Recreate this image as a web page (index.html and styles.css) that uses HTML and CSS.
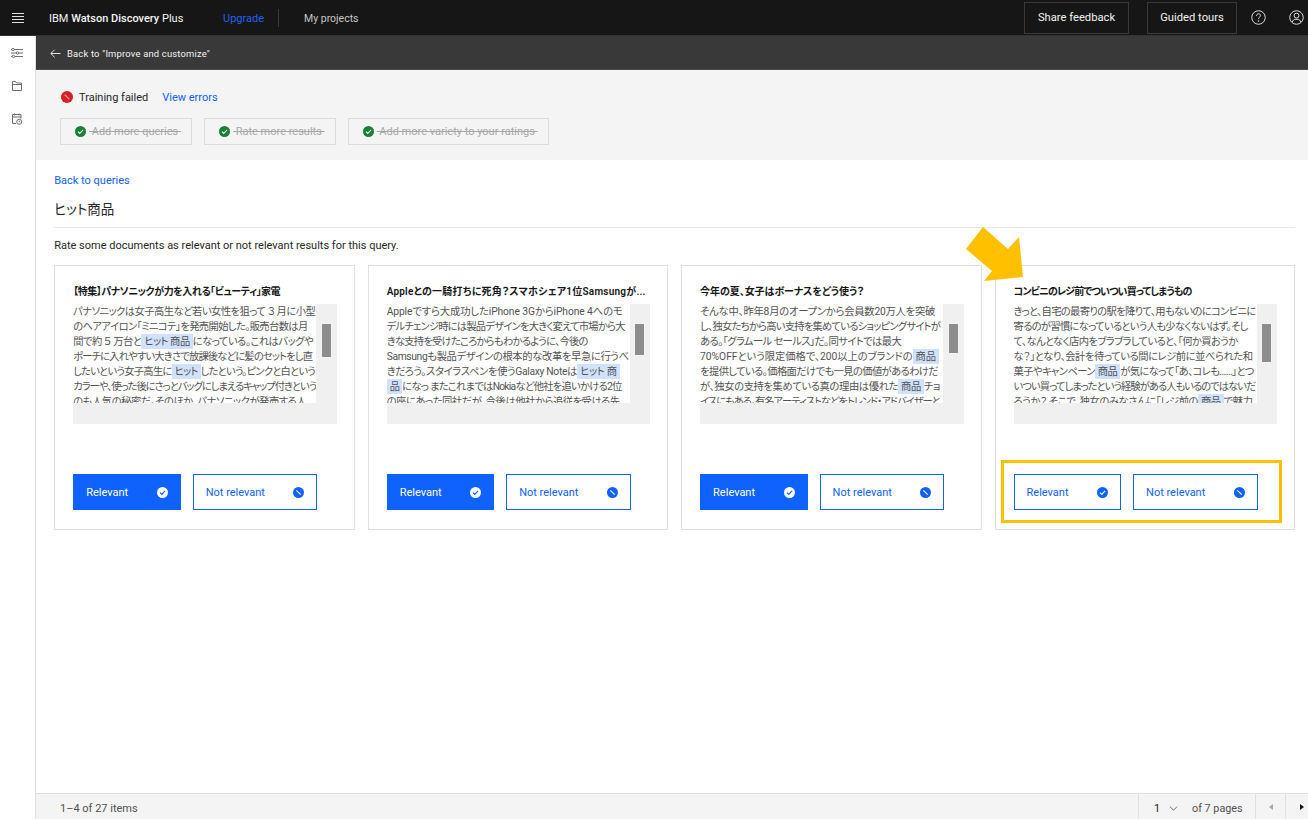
FILE: index.html
```html
<!DOCTYPE html>
<html lang="ja">
<head>
<meta charset="utf-8">
<title>IBM Watson Discovery Plus</title>
<link rel="stylesheet" href="styles.css">
</head>
<body>
<svg class="sprite" width="0" height="0" aria-hidden="true">
  <symbol id="i-check" viewBox="0 0 16 16"><circle cx="8" cy="8" r="8" fill="currentColor"/><path d="M4.4 8.2 7 10.8l4.7-5.2" fill="none" stroke="var(--mark)" stroke-width="1.6"/></symbol>
  <symbol id="i-block" viewBox="0 0 16 16"><circle cx="8" cy="8" r="8" fill="currentColor"/><path d="M4.8 4.8l6.4 6.4" fill="none" stroke="var(--mark)" stroke-width="1.6"/></symbol>
</svg>
<header class="topbar">
  <svg class="menu-icon" viewBox="0 0 12 10"><path d="M0 .5h12M0 3.5h12M0 6.5h12M0 9.5h12" stroke="#e0e0e0" fill="none"/></svg>
  <div class="brand">IBM <b>Watson Discovery</b> Plus</div>
  <a class="upgrade">Upgrade</a>
  <span class="top-divider"></span>
  <a class="projects">My projects</a>
  <div class="top-actions">
    <button class="top-btn top-btn-feedback">Share feedback</button>
    <button class="top-btn top-btn-tours">Guided tours</button>
    <svg class="top-icon top-icon-help" viewBox="0 0 16 16"><circle cx="8" cy="8" r="7.2" fill="none" stroke="#e8e8e8"/><path d="M5.9 6.2c0-1.3 1-2.1 2.2-2.1 1.2 0 2.1.8 2.1 1.9 0 1.6-2.2 1.6-2.2 3.4" fill="none" stroke="#e8e8e8"/><circle cx="8" cy="11.6" r=".8" fill="#e8e8e8"/></svg>
    <svg class="top-icon top-icon-user" viewBox="0 0 16 16"><circle cx="8" cy="8" r="7.2" fill="none" stroke="#e8e8e8"/><circle cx="8" cy="6" r="2.6" fill="none" stroke="#e8e8e8"/><path d="M3.6 13c.3-2 1.6-3 3-3h2.8c1.4 0 2.7 1 3 3" fill="none" stroke="#e8e8e8"/></svg>
  </div>
</header>
<div class="shell">
  <nav class="rail">
    <svg class="rail-icon" viewBox="0 0 12 12"><g fill="none" stroke="#6f6f6f"><path d="M3 2.5h9M0 2.5h1M8 6h4M0 6h5M4 9.5h8M0 9.5h1"/><circle cx="2" cy="2.5" r="1.2"/><circle cx="6.5" cy="6" r="1.2"/><circle cx="2.5" cy="9.5" r="1.2"/></g></svg>
    <svg class="rail-icon" viewBox="0 0 12 12"><path d="M1.5 1.5h3l1 1.500h5v7.500h-9zM1.500 4.500h9" fill="none" stroke="#6f6f6f"/></svg>
    <svg class="rail-icon" viewBox="0 0 12 12"><g fill="none" stroke="#6f6f6f"><path d="M5 10.500H1.500v-9h8.500v4M1.500 4h8.500M3.500 .5v2M8 .5v2"/><circle cx="8.200" cy="8.800" r="2.500"/><path d="M8.200 7.600v1.300h1"/></g></svg>
  </nav>
  <div class="main">
    <div class="subbar">
      <svg class="back-icon" viewBox="0 0 12 10"><path d="M11.500 5H1M5 .8 .8 5 5 9.200" fill="none" stroke="#f4f4f4"/></svg>
      <span>Back to "Improve and customize"</span>
    </div>
    <section class="status">
      <div class="status-row">
        <svg class="status-icon"><use href="#i-block"/></svg>
        <span class="status-text">Training failed</span>
        <a class="link status-link">View errors</a>
      </div>
      <div class="chips">
        <div class="chip"><svg class="chip-icon"><use href="#i-check"/></svg><s>&nbsp;Add more queries&nbsp;</s></div>
        <div class="chip"><svg class="chip-icon"><use href="#i-check"/></svg><s>&nbsp;Rate more results&nbsp;</s></div>
        <div class="chip"><svg class="chip-icon"><use href="#i-check"/></svg><s>&nbsp;Add more variety to your ratings&nbsp;</s></div>
      </div>
    </section>
    <section class="content">
      <a class="link back-link">Back to queries</a>
      <h1 class="query">ヒット商品</h1>
      <p class="hint">Rate some documents as relevant or not relevant results for this query.</p>
      <div class="cards">
        <article class="card">
          <h2 class="card-title"><span class="line" data-w="207">【特集】パナソニックが力を入れる「ビューティ」家電</span></h2>
          <div class="doc">
            <div class="doc-text">
              <span class="line" data-w="242">パナソニックは女子高生など若い女性を狙って ３ 月に小型</span>
              <span class="line" data-w="234">のヘアアイロン「ミニコテ」を発売開始した。販売台数は月</span>
              <span class="line" data-w="240">間で約 ５ 万台と<mark>ヒット 商品</mark>になっている。これはバッグや</span>
              <span class="line" data-w="239">ポーチに入れやすい大きさで放課後などに髪のセットをし直</span>
              <span class="line" data-w="242">したいという女子高生に<mark>ヒット</mark>したという。ピンクと白という</span>
              <span class="line" data-w="243">カラーや、使った後にさっとバッグにしまえるキャップ付きという</span>
              <span class="line" data-w="233">のも人気の秘密だ。そのほか、パナソニックが発売する人</span>
            </div>
            <div class="track"><div class="thumb thumb-a"></div></div>
          </div>
          <div class="actions">
            <button class="btn btn-on">Relevant<svg class="btn-icon"><use href="#i-check"/></svg></button>
            <button class="btn btn-wide">Not relevant<svg class="btn-icon"><use href="#i-block"/></svg></button>
          </div>
        </article>
        <article class="card">
          <h2 class="card-title"><span class="line" data-w="259">Appleとの一騎打ちに死角？スマホシェア1位Samsungが...</span></h2>
          <div class="doc">
            <div class="doc-text">
              <span class="line" data-w="236">Appleですら大成功したiPhone 3GからiPhone 4へのモ</span>
              <span class="line" data-w="238">デルチェンジ時には製品デザインを大きく変えて市場から大</span>
              <span class="line" data-w="201">きな支持を受けたころからもわかるように、今後の</span>
              <span class="line" data-w="242">Samsungも製品デザインの根本的な改革を早急に行うべ</span>
              <span class="line" data-w="233">きだろう。スタイラスペンを使うGalaxy Noteは<mark>ヒット 商</mark></span>
              <span class="line" data-w="235"><mark>品</mark>になっ またこれまではNokiaなど他社を追いかける2位</span>
              <span class="line" data-w="233">の座にあった同社だが、今後は他社から追従を受ける先</span>
            </div>
            <div class="track"><div class="thumb thumb-b"></div></div>
          </div>
          <div class="actions">
            <button class="btn btn-on">Relevant<svg class="btn-icon"><use href="#i-check"/></svg></button>
            <button class="btn btn-wide">Not relevant<svg class="btn-icon"><use href="#i-block"/></svg></button>
          </div>
        </article>
        <article class="card">
          <h2 class="card-title"><span class="line" data-w="164">今年の夏、女子はボーナスをどう使う？</span></h2>
          <div class="doc">
            <div class="doc-text">
              <span class="line" data-w="235">そんな中、昨年8月のオープンから会員数20万人を突破</span>
              <span class="line" data-w="240">し、独女たちから高い支持を集めているショッピングサイトが</span>
              <span class="line" data-w="201">ある。「グラムール セールス」だ。同サイトでは最大</span>
              <span class="line" data-w="239">70%OFFという限定価格で、200以上のブランドの<mark>商品</mark></span>
              <span class="line" data-w="238">を提供している。価格面だけでも一見の価値があるわけだ</span>
              <span class="line" data-w="240">が、独女の支持を集めている真の理由は優れた<mark>商品</mark>チョ</span>
              <span class="line" data-w="239">イスにもある。有名アーティストなどをトレンド・アドバイザーと</span>
            </div>
            <div class="track"><div class="thumb thumb-c"></div></div>
          </div>
          <div class="actions">
            <button class="btn btn-on">Relevant<svg class="btn-icon"><use href="#i-check"/></svg></button>
            <button class="btn btn-wide">Not relevant<svg class="btn-icon"><use href="#i-block"/></svg></button>
          </div>
        </article>
        <article class="card">
          <h2 class="card-title"><span class="line" data-w="178">コンビニのレジ前でついつい買ってしまうもの</span></h2>
          <div class="doc">
            <div class="doc-text">
              <span class="line" data-w="242">きっと、自宅の最寄りの駅を降りて、用もないのにコンビニに</span>
              <span class="line" data-w="234">寄るのが習慣になっているという人も少なくないはず。そし</span>
              <span class="line" data-w="224">て、なんとなく店内をブラブラしていると、「何か買おうか</span>
              <span class="line" data-w="239">な？」となり、会計を待っている間にレジ前に並べられた和</span>
              <span class="line" data-w="240">菓子やキャンペーン<mark>商品</mark>が気になって「あ、コレも……」とつ</span>
              <span class="line" data-w="242">いつい買ってしまったという経験がある人もいるのではないだ</span>
              <span class="line" data-w="239">ろうか？ そこで、独女のみなさんに「レジ前の<mark>商品</mark>で魅力</span>
            </div>
            <div class="track"><div class="thumb thumb-d"></div></div>
          </div>
          <div class="actions">
            <button class="btn">Relevant<svg class="btn-icon"><use href="#i-check"/></svg></button>
            <button class="btn btn-wide">Not relevant<svg class="btn-icon"><use href="#i-block"/></svg></button>
          </div>
          <div class="callout-box"></div>
        </article>
      </div>
      <svg class="callout-arrow" viewBox="0 0 60 56"><polygon points="0,22 17,0 42,22 53,10 57,50 18,54 26,44" fill="#ffc000"/></svg>
    </section>
    <footer class="pager">
      <span class="pager-count">1–4 of 27 items</span>
      <div class="pager-pages">
        <span class="pager-num">1</span>
        <svg class="pager-chev" viewBox="0 0 10 6"><path d="M.7.7 5 5 9.300.7" fill="none" stroke="#525252"/></svg>
        <span class="pager-of">of 7 pages</span>
      </div>
      <div class="pager-nav"><span class="tri tri-left"></span></div>
      <div class="pager-nav pager-nav-last"><span class="tri tri-right"></span></div>
    </footer>
  </div>
</div>
<script src="fit.js"></script>
</body>
</html>
```

FILE: styles.css
```css
* { box-sizing: border-box; }
html, body { margin: 0; height: 100%; overflow: hidden; }
body {
  font-family: Roboto, "Noto Sans CJK JP", sans-serif;
  font-size: 11px;
  color: #161616;
  background: #fff;
  display: flex;
  flex-direction: column;
}
.sprite { position: absolute; }

.topbar {
  height: 36px;
  flex: none;
  display: flex;
  align-items: center;
  background: #161616;
  border-bottom: 1px solid #333;
  padding-left: 12px;
}
.menu-icon { width: 12px; height: 10px; margin-right: 25px; }
.brand { color: #f4f4f4; font-size: 11px; width: 174px; padding-top: 1px; }
.brand b { font-weight: 500; }
.upgrade { color: #1f62f0; font-size: 11px; width: 55px; padding-top: 1px; }
.top-divider { width: 1px; height: 18px; background: #393939; }
.projects { color: #c6c6c6; font-size: 10.500px; margin-left: 25px; padding-top: 1px; }
.top-actions { margin-left: auto; display: flex; align-items: center; height: 100%; }
.top-btn {
  height: 32px;
  border: 1px solid #393939;
  background: #161616;
  color: #f4f4f4;
  font: 11.200px Roboto, sans-serif;
  padding: 0;
}
.top-btn-feedback { width: 105px; margin-right: 18px; }
.top-btn-tours { width: 90px; }
.top-icon { width: 15px; height: 15px; }
.top-icon-help { margin-left: 14px; }
.top-icon-user { margin-left: 23px; margin-right: 4px; }

.shell { flex: 1; display: flex; min-height: 0; }
.rail {
  width: 36px;
  flex: none;
  background: #fff;
  border-right: 1px solid #e0e0e0;
  display: flex;
  flex-direction: column;
  align-items: center;
  gap: 21px;
  padding-top: 11px;
}
.rail-icon { width: 12px; height: 12px; margin-right: 1px; }
.main { flex: 1; display: flex; flex-direction: column; min-width: 0; }

.subbar {
  height: 34px;
  flex: none;
  display: flex;
  align-items: center;
  gap: 6px;
  padding: 1px 0 0 14px;
  background: #393939;
  border-bottom: 1px solid #4c4c4c;
  color: #f4f4f4;
  font-size: 9.400px;
  letter-spacing: .2px;
}
.back-icon { width: 11px; height: 9px; }

.status { flex: none; height: 90px; background: #f4f4f4; padding: 19px 24px 0; }
.status-row { display: flex; align-items: center; height: 16px; }
.status-icon { width: 12px; height: 12px; color: #da1e28; --mark: #f4a5a8; margin-left: 1px; }
.status-text { margin-left: 6px; font-size: 11px; color: #262626; }
.status-link { margin-left: 14px; font-size: 11px; }
.link { color: #0f62fe; }
.chips { display: flex; gap: 12px; margin-top: 13px; }
.chip {
  height: 27px;
  display: flex;
  align-items: center;
  padding: 0 10px 0 14px;
  border: 1px solid #dcdcdc;
  color: #a8a8a8;
  font-size: 11px;
  white-space: nowrap;
}
.chip s { margin-left: 3px; }
.chip-icon { width: 11px; height: 11px; color: #198038; --mark: #fff; }

.content { flex: 1; position: relative; padding: 13px 13px 0 18.200px; min-height: 0; }
.back-link { display: block; font-size: 11px; line-height: 15px; }
.query {
  margin: 11px 0 0;
  font-size: 13.500px;
  font-weight: 400;
  line-height: 20px;
  padding-bottom: 8px;
  border-bottom: 1px solid #e8e8e8;
  color: #262626;
  font-feature-settings: "palt";
}
.hint { margin: 11px 0 0; font-size: 11px; line-height: 14px; color: #262626; }
.cards { display: grid; grid-template-columns: repeat(4, 1fr); gap: 13px; margin-top: 12px; }
.card {
  position: relative;
  height: 265px;
  border: 1px solid #e0e0e0;
  padding: 16px 17px 0 18px;
  display: flex;
  flex-direction: column;
}
.card-title {
  margin: 0;
  font-size: 10px;
  line-height: 20px;
  height: 22px;
  font-weight: 600;
  white-space: nowrap;
  overflow: hidden;
  font-feature-settings: "palt";
  color: #161616;
}
.line { display: block; width: max-content; }
.doc { display: flex; height: 120px; background: #f0f0f0; }
.doc-text {
  width: 243px;
  flex: none;
  height: 99px;
  overflow: hidden;
  background: #fff;
  color: #525252;
  font-size: 10.300px;
  line-height: 15px;
  white-space: nowrap;
  font-feature-settings: "palt";
}
.doc-text mark { background: #d0e2ff; color: #525252; padding: 1px 3px; }
.track { flex: 1; display: flex; justify-content: center; padding-top: 19px; }
.thumb { width: 11px; background: #8d8d8d; border: 1px solid #f4f4f4; }
.thumb-a { height: 35px; }
.thumb-b { height: 33px; }
.thumb-c { height: 31px; }
.thumb-d { height: 40px; }
.actions { display: flex; gap: 12px; margin-top: 50px; }
.btn {
  width: 107.500px;
  height: 36px;
  display: flex;
  align-items: center;
  justify-content: space-between;
  padding: 0 12px 0 12px;
  background: #fff;
  color: #0f62fe;
  border: 1px solid #0f62fe;
  font: 11px Roboto, sans-serif;
  --mark: #fff;
}
.btn-wide { width: 124.500px; }
.btn-on { background: #0f62fe; color: #fff; --mark: #0f62fe; }
.btn-icon { width: 11px; height: 11px; }
.callout-box {
  position: absolute;
  left: 5px;
  top: 194px;
  width: 281px;
  height: 63px;
  border: 3px solid #ffc000;
}
.callout-arrow { position: absolute; left: 930px; top: 67px; width: 60px; height: 56px; }

.pager {
  height: 26px;
  flex: none;
  display: flex;
  align-items: center;
  background: #f4f4f4;
  border-top: 1px solid #e0e0e0;
  color: #525252;
}
.pager-count { margin: 3px 0 0 24px; font-size: 11px; }
.pager-pages {
  margin-left: auto;
  width: 117px;
  height: 100%;
  display: flex;
  align-items: center;
  border-left: 1px solid #e0e0e0;
  padding: 3px 0 0 15px;
}
.pager-num { font-size: 11px; color: #262626; width: 15px; }
.pager-chev { width: 9px; height: 5px; }
.pager-of { margin-left: 14px; font-size: 10.800px; }
.pager-nav {
  width: 30px;
  height: 100%;
  display: flex;
  align-items: center;
  justify-content: center;
  border-left: 1px solid #e0e0e0;
}
.pager-nav-last { width: 23px; justify-content: flex-start; padding-left: 14px; }
.tri { width: 0; height: 0; border-top: 3.500px solid transparent; border-bottom: 3.500px solid transparent; }
.tri-left { border-right: 4px solid #a8a8a8; }
.tri-right { border-left: 4px solid #161616; }
```

FILE: fit.js
```js
// Each line's reference width is in data-w; tracking is computed to reach it.
document.querySelectorAll('.line[data-w]').forEach(function (line) {
  var measured = line.getBoundingClientRect().width;
  var count = line.textContent.length;
  line.style.letterSpacing = ((Number(line.dataset.w) - measured) / count).toFixed(3) + 'px';
});
```
